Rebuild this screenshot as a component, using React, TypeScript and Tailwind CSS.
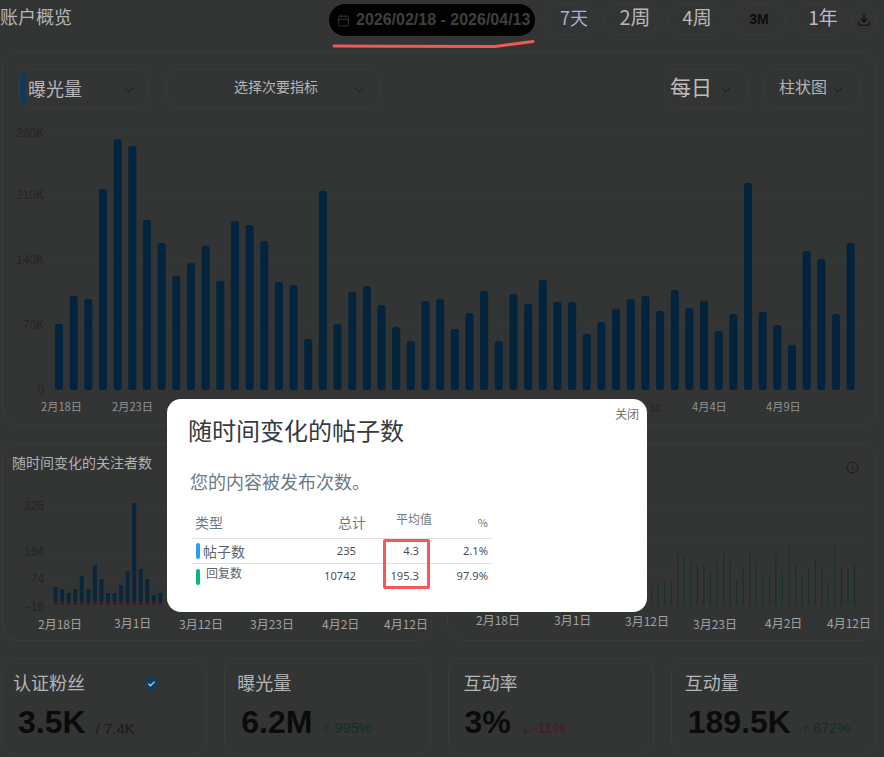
import { ChevronDown, Calendar, Download, Info, ArrowUp, ArrowDown } from "lucide-react";

const mainTops = [324,296,299,189,139,146,220,243,276,263,246,281,221,225,241,282,285,339,191,324,292,286,305,327,341,301,299,329,313,291,341,294,304,280,302,302,334,322,309,299,296,311,290,308,301,331,314,183,312,325,345,251,259,314,243];
const followTops = [587,589,593,589,576,589,565,579,593,593,585,571,503,569,579,595,593];
const greenTops = [586,582,580,581,553,557,563,564,565,572,562,553,563,580,567,553,561,573,575,554,570,545,563,576,568,560,569,584,545,568,568,565];

function Select({ className, label, labelClass, chevClass }: { className: string; label: string; labelClass: string; chevClass?: string }) {
  return (
    <div className={`relative flex h-[39px] items-center rounded-[10px] border border-[#383939] ${className}`}>
      <span className={labelClass}>{label}</span>
      <ChevronDown className={`absolute h-[16px] w-[16px] text-[#1c1d1d] ${chevClass ?? ""}`} strokeWidth={1.5} />
    </div>
  );
}

function RangeBtn({ w, label, cls }: { w: string; label: string; cls: string }) {
  return (
    <div className={`flex h-[31px] items-center justify-center rounded-full border border-[#393a3a] ${w} ${cls}`}>{label}</div>
  );
}

function Stat({ title, value, badge, extra, pad }: { title: string; value: string; badge?: boolean; extra: React.ReactNode; pad: string }) {
  return (
    <div className="relative h-[97px] rounded-[14px] border border-[#3a3b3b] pt-[9px]">
      <div className={`text-[18px] leading-[28px] text-[#b4b5b7] ${pad}`}>{title}</div>
      {badge && (
        <svg className="absolute left-[142px] top-[17px] h-[15px] w-[15px]" viewBox="0 0 16 16">
          <circle cx="8" cy="8" r="7" fill="#0e3f63" />
          <path d="M4.8 8.2l2.2 2.2 4.2-4.4" fill="none" stroke="#b9c6d2" strokeWidth="1.5" />
        </svg>
      )}
      <div className="mt-[7px] flex items-baseline gap-[8px] pl-[16px] font-['Liberation_Sans',sans-serif]">
        <span className="text-[32px] font-bold leading-[38px] text-[#0b0b0b]">{value}</span>
        {extra}
      </div>
    </div>
  );
}

function Delta({ up, text }: { up?: boolean; text: string }) {
  const cls = up ? "text-[#12302a]" : "text-[#451a20]";
  const Icon = up ? ArrowUp : ArrowDown;
  return (
    <span className={`flex items-center gap-[1px] self-end pb-[1px] text-[14.5px] ${cls}`}>
      <Icon className="h-[13px] w-[13px]" strokeWidth={1.5} />
      {text}
    </span>
  );
}

export default function App() {
  return (
    <div className="relative h-[757px] w-[884px] overflow-hidden bg-[#333434] font-['Noto_Sans_CJK_SC','Liberation_Sans',sans-serif]">
      {/* header */}
      <div className="flex h-[36px] items-start pt-[4px]">
        <div className="w-[329px] text-[18px] leading-[24px] text-[#b3b4b5]">账户概览</div>
        <div className="flex h-[32px] w-[206px] items-center gap-[6px] whitespace-nowrap rounded-full bg-[#020202] pl-[8px] font-['Liberation_Sans',sans-serif] text-[16px] font-bold text-[#3f3f3f]">
          <Calendar className="h-[13px] w-[13px] shrink-0 text-[#3c3c3c]" strokeWidth={1.5} />
          <span>2026/02/18 - 2026/04/13</span>
        </div>
        <div className="ml-[8px] flex gap-[8px]">
          <RangeBtn w="w-[52px]" label="7天" cls="pb-[5px] pl-[10px] text-[18px] text-[#aab2cc]" />
          <RangeBtn w="w-[56px]" label="2周" cls="pb-[6px] pl-[8px] text-[20px] text-[#b9b7bb]" />
          <RangeBtn w="w-[57px]" label="4周" cls="pb-[5px] pl-[3px] text-[19px] text-[#b9b7bb]" />
          <RangeBtn w="w-[54px]" label="3M" cls="font-['Liberation_Sans',sans-serif] text-[14px] font-bold text-[#0d0d0d]" />
          <RangeBtn w="w-[50px]" label="1年" cls="pb-[5px] pl-[8px] text-[19px] text-[#c6b4ca]" />
          <div className="flex h-[31px] w-[24px] items-center justify-center rounded-full border border-[#393a3a]">
            <Download className="h-[14px] w-[14px] text-[#0b0b0b]" strokeWidth={2} />
          </div>
        </div>
      </div>
      <svg className="absolute left-[330px] top-[38px] h-[12px] w-[208px]" viewBox="330 38 208 12">
        <path d="M334 46L390 46.3L495 46.5L510 44.5L533 41.5" fill="none" stroke="#f55656" strokeWidth="3" strokeLinecap="round" />
      </svg>

      {/* main chart card */}
      <div className="ml-[2px] mt-[16px] h-[374px] w-[875px] rounded-[16px] border border-[#3a3b3b]">
        <div className="flex pl-[16px] pt-[16px]">
          <Select className="w-[130px] overflow-hidden pl-[8px] before:absolute before:left-[-1px] before:top-[0px] before:h-[38px] before:w-[6px] before:rounded-l-[6px] before:bg-[#0b3a5e] before:content-['']" label="曝光量" labelClass="text-[18px] text-[#b9b8bb]" chevClass="right-[11px] top-[12px]" />
          <Select className="ml-[17px] w-[214px] pb-[4px] pl-[67px]" label="选择次要指标" labelClass="text-[14px] text-[#b5b5b6]" chevClass="right-[12px] top-[12px]" />
          <Select className="ml-[284px] w-[84px] pb-[4px] pl-[5px]" label="每日" labelClass="text-[21px] text-[#c2bcbc]" chevClass="right-[13px] top-[12px]" />
          <Select className="ml-[16px] w-[96px] pb-[5px] pl-[14px]" label="柱状图" labelClass="text-[16px] text-[#b3b3b6]" chevClass="right-[13px] top-[12px]" />
        </div>
        <svg className="block h-[317px] w-[873px]" viewBox="3 108 873 317" fontFamily="'Liberation Sans', sans-serif">
          {[133, 195, 260, 325].map((y) => (
            <line key={y} x1="50" x2="860" y1={y} y2={y} stroke="#393a3a" />
          ))}
          {[["280K", 137], ["210K", 199], ["140K", 264], ["70K", 329], ["0", 394]].map(([t, y]) => (
            <text key={t} x="44" y={y} textAnchor="end" fontSize="12" fill="#242525">{t}</text>
          ))}
          {mainTops.map((top, i) => (
            <rect key={i} x={55 + i * 14.66} y={top} width="8" height={390 - top} rx="2.5" fill="#03243c" />
          ))}
          <g fontFamily="'Noto Sans CJK SC', sans-serif" fontSize="11.2" fill="#929293">
            <text x="41" y="411">2月18日</text>
            <text x="112" y="411">2月23日</text>
            <text x="692" y="411">4月4日</text>
            <text x="766" y="411">4月9日</text>
            <text x="649" y="412" fill="#252525">30</text>
          </g>
        </svg>
      </div>

      {/* small charts */}
      <div className="ml-[2px] mt-[17px] flex w-[875px] gap-[15px]">
        <div className="h-[198px] w-[430px] rounded-[16px] border border-[#3a3b3b]">
          <div className="h-[31px] pl-[9px] pt-[7px] text-[14px] leading-[22px] text-[#b1b2b3]">随时间变化的关注者数</div>
          <svg className="block h-[165px] w-[428px]" viewBox="3 475 428 165" fontFamily="'Liberation Sans', sans-serif">
            {[509, 556, 583, 602].map((y) => (
              <line key={y} x1="50" x2="425" y1={y} y2={y} stroke="#393a3a" />
            ))}
            {[["325", 510], ["164", 556], ["74", 583], ["-16", 611]].map(([t, y]) => (
              <text key={t} x="44" y={y} textAnchor="end" fontSize="12" fill="#242525">{t}</text>
            ))}
            {followTops.map((top, i) => (
              <g key={i}>
                <rect x={53.6 + i * 6.55} y={top} width="4" height={602 - top} rx="1" fill="#0a263c" />
                <rect x={53.6 + i * 6.55} y="602" width="4" height="2.5" rx="1" fill="#3f1a20" />
              </g>
            ))}
            <g fontFamily="'Noto Sans CJK SC', sans-serif" fontSize="12" fill="#a2a2a3">
              <text x="38" y="629">2月18日</text>
              <text x="114" y="628">3月1日</text>
              <text x="179" y="629">3月12日</text>
              <text x="250" y="629">3月23日</text>
              <text x="322" y="629">4月2日</text>
              <text x="384" y="629">4月12日</text>
            </g>
          </svg>
        </div>
        <div className="relative h-[198px] w-[430px] rounded-[16px] border border-[#3a3b3b]">
          <Info className="absolute right-[17px] top-[17px] h-[13px] w-[13px] text-[#161616]" strokeWidth={1.5} />
          <svg className="mt-[31px] block h-[165px] w-[428px]" viewBox="448 475 428 165" fontFamily="'Noto Sans CJK SC', sans-serif">
            {[507, 539, 573].map((y) => (
              <line key={y} x1="640" x2="860" y1={y} y2={y} stroke="#393a3a" />
            ))}
            {greenTops.map((top, i) => (
              <rect key={i} x={651 + i * 6.55} y={top} width="1" height={606 - top} fill="#14322a" />
            ))}
            <g fontSize="12" fill="#a2a2a3">
              <text x="476" y="625">2月18日</text>
              <text x="554" y="625">3月1日</text>
              <text x="625" y="626">3月12日</text>
              <text x="693" y="629">3月23日</text>
              <text x="765" y="628">4月2日</text>
              <text x="827" y="628">4月12日</text>
            </g>
          </svg>
        </div>
      </div>

      {/* stat cards */}
      <div className="ml-[1px] mt-[17px] grid w-[876px] grid-cols-4 gap-[17px]">
        <Stat pad="pl-[11px]" title="认证粉丝" value="3.5K" badge extra={<span className="ml-[2px] self-end pb-[1px] text-[15px] text-[#1b1b1b]">/ 7.4K</span>} />
        <Stat pad="pl-[12px]" title="曝光量" value="6.2M" extra={<Delta up text="995%" />} />
        <Stat pad="pl-[15px]" title="互动率" value="3%" extra={<Delta text="-11%" />} />
        <Stat pad="pl-[13px]" title="互动量" value="189.5K" extra={<Delta up text="872%" />} />
      </div>

      {/* modal */}
      <div className="absolute left-[167px] top-[399px] h-[213px] w-[480px] rounded-[14px] bg-white pl-[21px]">
        <div className="absolute right-[8px] top-[6px] text-[12px] leading-[18px] text-[#6f6f6f]">关闭</div>
        <div className="pt-[13px] text-[24px] leading-[36px] text-[#343a40]">随时间变化的帖子数</div>
        <div className="mt-[20px] pl-[2px] text-[18px] leading-[26px] text-[#6c7a84]">您的内容被发布次数。</div>
        <div className="mt-[12px] ml-[4px] w-[300px] text-[#4a5057]">
          <div className="grid h-[33px] grid-cols-[120px_54px_66px_60px] items-center border-b border-[#dee2e6] text-[14px] text-[#6c7a84]">
            <span className="pl-[3px]">类型</span>
            <span className="text-right">总计</span>
            <span className="-mt-[6px] text-right text-[12px]">平均值</span>
            <span className="pr-[4px] text-right text-[11px]">%</span>
          </div>
          <div className="grid h-[25px] grid-cols-[120px_44px_63px_73px] items-center border-b border-[#dee2e6] font-['Noto_Sans',sans-serif] text-[11.2px]">
            <span className="flex items-center font-['Noto_Sans_CJK_SC',sans-serif] text-[14px] text-[#5c636a]">
              <i className="ml-[4px] mr-[3px] h-[16px] w-[4px] rounded-full bg-[#2c9cef]" />帖子数
            </span>
            <span className="text-right">235</span>
            <span className="text-right">4.3</span>
            <span className="pr-[4px] text-right">2.1%</span>
          </div>
          <div className="grid h-[25px] grid-cols-[120px_44px_63px_73px] items-center font-['Noto_Sans',sans-serif] text-[11.2px]">
            <span className="flex items-center font-['Noto_Sans_CJK_SC',sans-serif] text-[12px] text-[#5c636a]">
              <i className="ml-[4px] mr-[6px] h-[16px] w-[4px] rounded-full bg-[#0cb57d]" /><span className="-mt-[8px]">回复数</span>
            </span>
            <span className="text-right">10742</span>
            <span className="text-right">195.3</span>
            <span className="pr-[4px] text-right">97.9%</span>
          </div>
        </div>
        <div className="absolute left-[216px] top-[140px] h-[50px] w-[47px] rounded-[2px] border-[3px] border-[#f55656]" />
      </div>
    </div>
  );
}
